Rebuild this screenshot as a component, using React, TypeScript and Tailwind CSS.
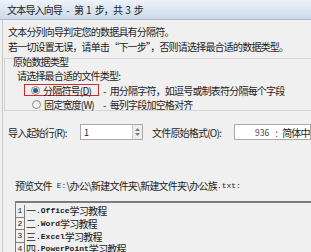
import React from "react";

const cjk = { fontFamily: '"Noto Sans CJK SC", "Noto Sans", sans-serif' };
const mono = { fontFamily: '"Liberation Mono", monospace' };

function Sp({ w }: { w: number }) {
  return <span className="inline-block" style={{ width: w }} />;
}

function Radio({ checked }: { checked?: boolean }) {
  return (
    <span className="w-[9px] h-[9px] rounded-full border border-[#8a8a8a] bg-gradient-to-b from-[#e6e6e6] to-[#ffffff] flex items-center justify-center shrink-0">
      {checked && <span className="w-[5px] h-[5px] rounded-full bg-[#2a5d9c]" />}
    </span>
  );
}

const rows = [
  { n: "1", a: "一", b: ".Office", c: "学习教程" },
  { n: "2", a: "二", b: ".Word", c: "学习教程" },
  { n: "3", a: "三", b: ".Excel", c: "学习教程" },
  { n: "4", a: "四", b: ".PowerPoint", c: "学习教程" },
];

export default function App() {
  return (
    <div
      className="w-[311px] h-[252px] overflow-hidden bg-[#f0f0f0] text-[#1c1c1c] text-[10px] tracking-[-0.8px] leading-[15px]"
      style={cjk}
    >
      {/* title bar */}
      <div className="h-[20px] bg-gradient-to-b from-[#eef3f9] to-[#cbd9ea] border-b border-[#a8b7c9] pl-[7px] flex items-center whitespace-nowrap">
        <span>文本导入向导</span>
        <Sp w={4} />
        <span>-</span>
        <Sp w={5} />
        <span>第</span>
        <Sp w={3} />
        <span className="tracking-[0px]">1</span>
        <Sp w={3} />
        <span>步，共</span>
        <Sp w={3} />
        <span className="tracking-[0px]">3</span>
        <Sp w={3} />
        <span>步</span>
      </div>

      <div className="border-l border-[#c8c8c8] ml-[2px] h-full">
        <div className="pl-[5px] pt-[4px]">
          <div className="h-[15px]">文本分列向导判定您的数据具有分隔符。</div>
          <div className="h-[15px]">若一切设置无误，请单击“下一步”，否则请选择最合适的数据类型。</div>
        </div>

        {/* group box */}
        <div className="mt-[4px] ml-[1px] border-t border-l border-b border-[#d5d5d5] h-[53px]">
          <div className="-mt-[4px] pl-[8px] h-[13px] leading-[13px]">原始数据类型</div>
          <div className="pl-[12px] h-[14px] leading-[14px] mt-[1px]">请选择最合适的文件类型:</div>
          <div className="flex items-center h-[14px] whitespace-nowrap">
            <div className="ml-[19px] h-[12px] w-[75px] border-[1.5px] border-[#d42a2a] flex items-center pl-[6px]">
              <Radio checked />
              <span className="ml-[3px]">分隔符号(D)</span>
            </div>
            <span className="ml-[4px]">-</span>
            <Sp w={4} />
            <span>用分隔字符，如逗号或制表符分隔每个字段</span>
          </div>
          <div className="flex items-center h-[14px] whitespace-nowrap">
            <div className="ml-[20px] w-[75px] flex items-center pl-[7px]">
              <Radio />
              <span className="ml-[3px]">固定宽度(W)</span>
            </div>
            <span className="ml-[3px]">-</span>
            <Sp w={4} />
            <span>每列字段加空格对齐</span>
          </div>
        </div>

        {/* import row */}
        <div className="flex items-center mt-[13px] h-[16px] pl-[5px] whitespace-nowrap">
          <span className="w-[72px]">导入起始行(R):</span>
          <div className="w-[63px] h-[16px] bg-white border border-[#a9a9a9] flex items-center">
            <span className="flex-1 pl-[3px] text-[9px]">1</span>
            <div className="w-[10px] h-full border-l border-[#c9c9c9] bg-[#ececec] flex flex-col items-center justify-center gap-[2px]">
              <svg width="5" height="3" viewBox="0 0 5 3"><path d="M0 3 L2.5 0 L5 3 Z" fill="#7a7a7a" /></svg>
              <svg width="5" height="3" viewBox="0 0 5 3"><path d="M0 0 L2.5 3 L5 0 Z" fill="#7a7a7a" /></svg>
            </div>
          </div>
          <span className="ml-[9px] w-[82px]">文件原始格式(O):</span>
          <div className="flex-1 min-w-0 h-[16px] bg-white border border-[#a9a9a9] flex items-center pl-[20px] overflow-hidden">
            <span className="text-[8.5px] tracking-[0px] text-[#444]">936</span>
            <span className="ml-[6px] text-[#555]">:</span>
            <span className="ml-[5px]">简体中文</span>
          </div>
        </div>

        {/* preview label */}
        <div className="mt-[38px] pl-[12px] h-[15px] whitespace-nowrap flex items-center">
          <span>预览文件</span>
          <Sp w={5} />
          <span className="text-[8px] tracking-[0px]" style={mono}>E:</span>
          <span>\办公\新建文件夹\新建文件夹\办公族</span>
          <span className="text-[8px] tracking-[0px]" style={mono}>.txt:</span>
        </div>

        {/* preview box */}
        <div className="mt-[8px] ml-[12px] border-t-2 border-l border-[#7d7d7d] bg-[#f0f0f0] h-[60px] pt-[2px]">
          {rows.map((r) => (
            <div key={r.n} className="flex items-center h-[12.7px] leading-[12px] whitespace-nowrap">
              <span
                className="w-[9px] h-full border-r border-b border-[#7d7d7d] flex items-center justify-center text-[8px] tracking-[0px]"
                style={mono}
              >
                {r.n}
              </span>
              <span className="ml-[1px] text-[10px] tracking-[0px] leading-[12px]">{r.a}</span>
              <span className="text-[8px] tracking-[0px] font-bold leading-[12px]" style={mono}>
                {r.b}
              </span>
              <span className="text-[10px] tracking-[-0.8px] leading-[12px]">{r.c}</span>
            </div>
          ))}
        </div>
      </div>
    </div>
  );
}
